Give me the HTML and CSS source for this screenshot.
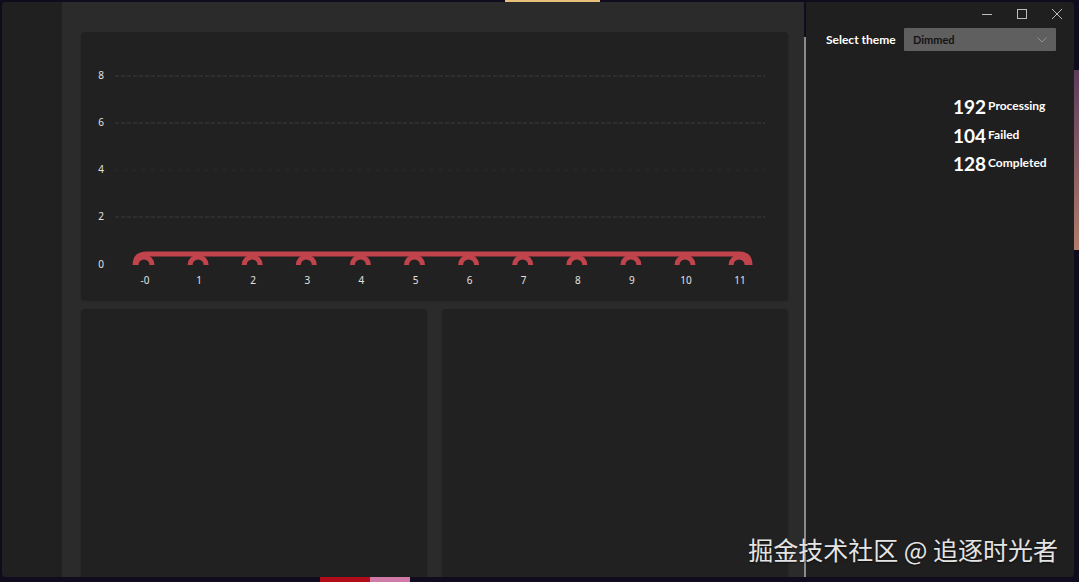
FILE: index.html
```html
<!DOCTYPE html>
<html lang="en">
<head>
    <meta charset="UTF-8">
    <meta name="viewport" content="width=device-width, initial-scale=1.0">
    <title>Job Dashboard</title>
    <link rel="stylesheet" href="styles.css">
</head>
<body>
    <div class="desktop">
        <div class="window">
            <nav class="sidebar"></nav>

            <main class="content">
                <section class="card chart-card">
                    <svg class="chart" width="707" height="268" viewBox="0 0 707 268">
                        <defs>
                            <clipPath id="plot">
                                <rect x="30" y="0" width="670" height="233"></rect>
                            </clipPath>
                        </defs>
                        <!-- grid -->
                        <g class="grid">
                            <line x1="34" y1="44" x2="684" y2="44"></line>
                            <line x1="34" y1="91" x2="684" y2="91"></line>
                            <line class="faint" x1="34" y1="138" x2="684" y2="138"></line>
                            <line x1="34" y1="185" x2="684" y2="185"></line>
                        </g>
                        <g class="axis-y">
                            <text x="20" y="44">8</text>
                            <text x="20" y="91">6</text>
                            <text x="20" y="138">4</text>
                            <text x="20" y="185">2</text>
                            <text x="20" y="233">0</text>
                        </g>
                        <g class="axis-x"></g>
                        <g class="series" clip-path="url(#plot)">
                            <path class="line" d="M54 233 Q54 222 66 222 L658 222 Q669 222 669 233"></path>
                            <g class="markers"></g>
                        </g>
                    </svg>
                </section>
                <div class="card-row">
                    <section class="card"></section>
                    <section class="card"></section>
                </div>
            </main>

            <div class="divider"></div>

            <aside class="panel">
                <div class="titlebar">
                    <button class="win-btn" aria-label="Minimize">
                        <svg width="10" height="10" viewBox="0 0 10 10"><path d="M0 5.5h10"></path></svg>
                    </button>
                    <button class="win-btn" aria-label="Maximize">
                        <svg width="10" height="10" viewBox="0 0 10 10"><rect x="0.5" y="0.5" width="9" height="9"></rect></svg>
                    </button>
                    <button class="win-btn" aria-label="Close">
                        <svg width="10" height="10" viewBox="0 0 10 10"><path d="M0 0l10 10M10 0L0 10"></path></svg>
                    </button>
                </div>

                <div class="theme-row">
                    <span class="theme-label">Select theme</span>
                    <div class="select">
                        <span>Dimmed</span>
                        <svg width="10" height="6" viewBox="0 0 10 6"><path d="M0.5 0.5L5 5L9.5 0.5"></path></svg>
                    </div>
                </div>

                <ul class="stats">
                    <li class="stat"><span class="stat-num">192</span><span class="stat-name">Processing</span></li>
                    <li class="stat"><span class="stat-num">104</span><span class="stat-name">Failed</span></li>
                    <li class="stat"><span class="stat-num">128</span><span class="stat-name">Completed</span></li>
                </ul>
            </aside>
        </div>

        <div class="watermark">掘金技术社区 @ 追逐时光者</div>
    </div>

    <script>
        // build x axis labels and markers
        const labels = ['-0', '1', '2', '3', '4', '5', '6', '7', '8', '9', '10', '11'];
        const xAxis = document.querySelector('.axis-x');
        const markers = document.querySelector('.markers');
        const ns = 'http://www.w3.org/2000/svg';

        labels.forEach((label, i) => {
            const x = 64 + i * 54.1;

            const text = document.createElementNS(ns, 'text');
            text.setAttribute('x', x);
            text.setAttribute('y', 249);
            text.textContent = label;
            xAxis.appendChild(text);

            const dot = document.createElementNS(ns, 'circle');
            dot.setAttribute('cx', x - 1);
            dot.setAttribute('cy', 233);
            dot.setAttribute('r', 8);
            markers.appendChild(dot);
        });
    </script>
</body>
</html>
```

FILE: styles.css
```css
* {
    box-sizing: border-box;
}

html,
body {
    margin: 0;
    height: 100%;
    overflow: hidden;
}

body {
    font-family: Lato, "Noto Sans", sans-serif;
    color: #fff;
    background:
        linear-gradient(#e8c07c, #e8c07c) 505px 0 / 95px 2px no-repeat,
        linear-gradient(#b00c1a, #b00c1a) 320px 577px / 50px 5px no-repeat,
        linear-gradient(#d07aa8, #d07aa8) 370px 577px / 40px 5px no-repeat,
        linear-gradient(#5a3c5c, #b07c6c) 1074px 70px / 5px 180px no-repeat,
        #100c1d;
}

.desktop {
    position: relative;
    height: 582px;
    padding: 2px 5px 5px 2px;
}

.window {
    display: flex;
    height: 575px;
    border-radius: 4px;
    overflow: hidden;
}

.sidebar {
    width: 60px;
    background-color: #202020;
}

.content {
    width: 742px;
    display: flex;
    flex-direction: column;
    padding: 30px 16px 0 19px;
    background-color: #2b2b2b;
}

.card {
    background-color: #212121;
    border-radius: 4px;
    box-shadow: 0 1px 2px rgba(0, 0, 0, 0.25);
}

.chart-card {
    height: 268px;
    flex-shrink: 0;
}

.chart {
    display: block;
}

.grid line {
    stroke: #3d3d3d;
    stroke-width: 1;
    stroke-dasharray: 4 2;
}

.grid .faint {
    stroke: #2c2c2c;
    stroke-dasharray: 3 6;
}

.axis-y text,
.axis-x text {
    font-family: "Noto Sans", sans-serif;
    font-size: 10px;
    fill: #e2e2e2;
    text-anchor: middle;
    dominant-baseline: middle;
}

.series .line {
    fill: none;
    stroke: #c1444c;
    stroke-width: 5;
    stroke-linecap: round;
}

.markers circle {
    fill: #212121;
    stroke: #c1444c;
    stroke-width: 5;
}

.card-row {
    flex: 1;
    display: flex;
    gap: 15px;
    margin-top: 9px;
}

.card-row .card {
    flex: 1;
    border-radius: 4px 4px 0 0;
}

.divider {
    width: 2px;
    margin-top: 35px;
    background-color: #8a8a8a;
}

.panel {
    flex: 1;
    display: flex;
    flex-direction: column;
    background-color: #1f1f1f;
}

.titlebar {
    display: flex;
    justify-content: flex-end;
    height: 24px;
}

.win-btn {
    width: 35px;
    height: 24px;
    padding: 0;
    border: none;
    background: none;
    display: flex;
    align-items: center;
    justify-content: center;
}

.win-btn svg {
    fill: none;
    stroke: #bdbdbd;
    stroke-width: 1;
}

.theme-row {
    display: flex;
    align-items: center;
    height: 23px;
    margin-top: 2px;
    padding: 0 18px 0 20px;
}

.theme-label {
    font-size: 12px;
    font-weight: 700;
    color: #fff;
}

.select {
    margin-left: auto;
    width: 152px;
    height: 23px;
    display: flex;
    align-items: center;
    justify-content: space-between;
    padding: 0 9px;
    background-color: #5f5f5f;
    border-radius: 1px;
    font-size: 11px;
    font-weight: 700;
    color: #141414;
}

.select svg {
    fill: none;
    stroke: #909090;
    stroke-width: 1;
}

.stats {
    list-style: none;
    margin: 42px 0 0 147px;
    padding: 0;
}

.stat {
    display: flex;
    align-items: flex-start;
    height: 28.5px;
    gap: 2px;
}

.stat-num {
    font-size: 19px;
    font-weight: 700;
    line-height: 28px;
}

.stat-name {
    font-size: 12px;
    font-weight: 700;
    line-height: 12px;
    margin-top: 7px;
}

.watermark {
    position: absolute;
    right: 21px;
    bottom: 18px;
    font-family: "Noto Sans CJK SC", sans-serif;
    font-size: 25px;
    line-height: 30px;
    color: #e4e4e4;
    text-shadow: 0 1px 2px rgba(0, 0, 0, 0.6);
}
```
